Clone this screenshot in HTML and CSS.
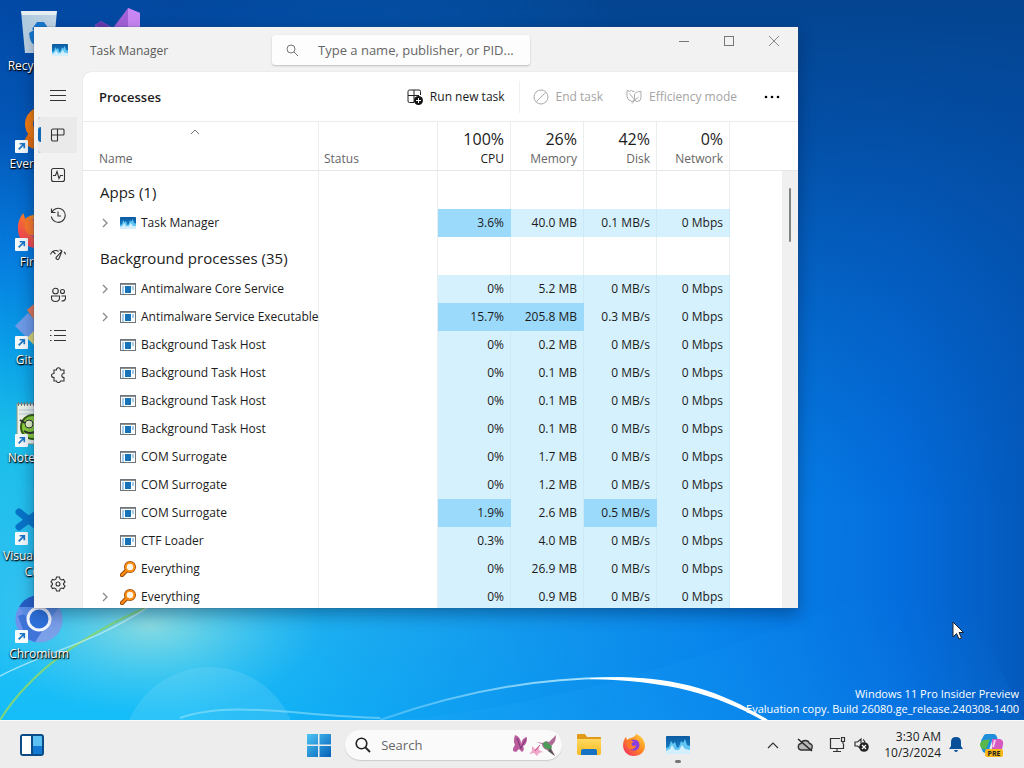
FILE: index.html
```html
<!DOCTYPE html>
<html lang="en">
<head>
<meta charset="utf-8">
<meta name="viewport" content="width=device-width, initial-scale=1">
<title>Task Manager</title>
<link rel="stylesheet" href="styles.css">
</head>
<body>
<svg class="defs" width="0" height="0" aria-hidden="true">
  <defs>
    <linearGradient id="gBlue" x1="0" y1="0" x2="1" y2="1"><stop offset="0" stop-color="#4cc4f4"/><stop offset="1" stop-color="#0560b8"/></linearGradient>
    <linearGradient id="gTm" x1="0" y1="0" x2="0" y2="1"><stop offset="0" stop-color="#0a5aa0"/><stop offset="1" stop-color="#1e90d8"/></linearGradient>
    <linearGradient id="gFox" x1="1" y1="0" x2="0" y2="1"><stop offset="0" stop-color="#ffe04a"/><stop offset=".45" stop-color="#ff8a1f"/><stop offset="1" stop-color="#f0246a"/></linearGradient>
    <linearGradient id="gBin" x1="0" y1="0" x2="1" y2="1"><stop offset="0" stop-color="#a9c6dc"/><stop offset="1" stop-color="#d8e6ef"/></linearGradient>
    <linearGradient id="gFolder" x1="0" y1="0" x2="0" y2="1"><stop offset="0" stop-color="#ffd961"/><stop offset="1" stop-color="#f9b920"/></linearGradient>
  </defs>
  <symbol id="tm" viewBox="0 0 24 18">
    <rect width="24" height="18" rx="1" fill="url(#gTm)"/>
    <path d="M0 12l3-1 2-6 2 3 2-2 2 6 2-1 2-6 2 2 2-4 2 6 3 1v8H0z" fill="#62c6f3"/>
    <path d="M0 15l4-2 2-4 3 5 4 0 3-5 3 4 5 1v4H0z" fill="#d3effb"/>
  </symbol>
  <symbol id="exe" viewBox="0 0 16 12">
    <rect x=".5" y=".5" width="15" height="11" fill="#fff" stroke="#6f7478"/>
    <path d="M1 1.500h14" stroke="#8a9196"/>
    <path d="M2 4h2M2 6h2M2 8h2M2 10h2" stroke="#4a9ad4"/>
    <rect x="5" y="3" width="6" height="7" fill="#1673ba"/>
    <path d="M12 4h2M12 6h2" stroke="#4a9ad4"/>
  </symbol>
  <symbol id="mag" viewBox="0 0 16 16">
    <path d="M6 10L2 14" stroke="#9a4a08" stroke-width="4.400" stroke-linecap="round"/>
    <circle cx="10" cy="6" r="4.200" fill="#fff" stroke="#9a4a08" stroke-width="3.600"/>
    <path d="M6 10L2 14" stroke="#ff8d12" stroke-width="2.400" stroke-linecap="round"/>
    <circle cx="10" cy="6" r="4.200" fill="#fff6e6" stroke="#ff8d12" stroke-width="2"/>
  </symbol>
  <symbol id="chev" viewBox="0 0 8 10"><path d="M2 1l4 4-4 4" fill="none" stroke="#888" stroke-width="1.300"/></symbol>
  <symbol id="arrow" viewBox="0 0 14 14"><rect width="14" height="14" rx="1" fill="#f5fafd"/><path d="M4 10l5-5M5 4h5v5" fill="none" stroke="#1c76c4" stroke-width="1.800"/></symbol>
  <symbol id="fox" viewBox="0 0 24 24">
    <path d="M12 23C5 23 1 18 1 12c0-4 2-7 3-8l1 3c1-1 3-2 4-2 2-1 4-1 5-4 5 2 9 6 9 12 0 6-5 10-11 10z" fill="url(#gFox)"/>
    <circle cx="12" cy="12" r="5.500" fill="#8a3fe0"/>
    <path d="M5 9c2-2 5-2 7 0-3 0-3 3-1 4 2 0 3-1 3-1 0 3-3 5-6 4-2-1-4-4-3-7z" fill="#ff7a2a"/>
  </symbol>
</svg>

<main class="desktop">
  <svg class="wallpaper" viewBox="0 0 1024 720" preserveAspectRatio="none" aria-hidden="true">
    <defs>
      <linearGradient id="wBase" x1="0" y1="0" x2="0" y2="1"><stop offset="0" stop-color="#0349a5"/><stop offset=".18" stop-color="#0457b8"/><stop offset=".36" stop-color="#067ee0"/><stop offset=".48" stop-color="#0a9ee8"/><stop offset=".6" stop-color="#1abeea"/><stop offset=".8" stop-color="#2cc0f0"/><stop offset="1" stop-color="#14bdf9"/></linearGradient>
      <linearGradient id="wRight" x1="0" y1="0" x2="1" y2="0"><stop offset=".18" stop-color="#0678e8" stop-opacity="0"/><stop offset=".7" stop-color="#0680ea" stop-opacity=".92"/><stop offset=".88" stop-color="#046ddd"/><stop offset="1" stop-color="#0459bc"/></linearGradient>
      <linearGradient id="wTop" x1="0" y1="0" x2="0" y2="1"><stop offset="0" stop-color="#04448f"/><stop offset=".2" stop-color="#044a9e" stop-opacity=".85"/><stop offset=".7" stop-color="#0457b5" stop-opacity="0"/></linearGradient>
      <linearGradient id="wFade" x1="0" y1="0" x2="1" y2="0"><stop offset="0" stop-color="#000"/><stop offset=".6" stop-color="#fff"/></linearGradient>
      <mask id="wMask"><rect width="1024" height="720" fill="url(#wFade)"/></mask>
      <radialGradient id="wGlow"><stop offset="0" stop-color="#a2e2dc" stop-opacity=".8"/><stop offset="1" stop-color="#5cd0ee" stop-opacity="0"/></radialGradient>
      <linearGradient id="wArc" x1="0" y1="0" x2="1" y2="0"><stop offset="0" stop-color="#b8ecff" stop-opacity=".3"/><stop offset=".7" stop-color="#c8f2ff"/><stop offset="1" stop-color="#fff"/></linearGradient>
      <linearGradient id="wRay" x1="0" y1="1" x2="1" y2="0"><stop offset="0" stop-color="#20a8fa" stop-opacity=".3"/><stop offset=".8" stop-color="#1593f5" stop-opacity="0"/></linearGradient>
    </defs>
    <rect width="1024" height="720" fill="url(#wBase)"/>
    <rect width="1024" height="720" fill="url(#wRight)"/>
    <rect width="1024" height="720" fill="url(#wTop)" mask="url(#wMask)"/>
    <ellipse cx="150" cy="625" rx="170" ry="90" fill="url(#wGlow)"/>
    <circle cx="210" cy="755" r="88" fill="#8fe0f8" opacity=".2"/>
    <path d="M400 720C600 700 760 640 950 560L1024 720z" fill="url(#wRay)"/>
    <path d="M0 720C25 680 70 640 150 606" fill="none" stroke="#7ed67c" stroke-width="2"/>
    <path d="M0 676C50 650 90 645 150 606" fill="none" stroke="#c8f2f8" stroke-width="1.500" opacity=".7"/>
    <path d="M180 718C230 700 300 716 380 718" fill="none" stroke="#a6e8fb" stroke-width="2" opacity=".5"/>
    <path d="M380 720C480 685 560 677 620 678C680 680 722 696 766 720" fill="none" stroke="url(#wArc)" stroke-width="2"/>
    <path d="M590 678C670 673 720 690 768 720H762C715 694 670 681 590 679z" fill="#fff"/>
  </svg>

  <ul class="shortcuts">
    <li class="shortcut">
      <svg class="big" viewBox="0 0 48 48" aria-hidden="true"><path d="M6 3h36l-4 42H10z" fill="url(#gBin)"/><path d="M6 3h36l-1 4H7z" fill="#e6eef4"/><path d="M17 21l5-7h7l4 6-4 3-4-4-3 6zM14 25l5-3 3 8h6v7h-7q-6 0-7-12z" fill="#1779cf"/></svg>
      <span>Recycle Bin</span></li>
    <li class="shortcut">
      <svg class="big" viewBox="0 0 48 48" aria-hidden="true"><path d="M20 28L13 40" stroke="#e86f0c" stroke-width="12"/><circle cx="27" cy="18" r="13" fill="none" stroke="#f57c0c" stroke-width="8"/><use href="#arrow" y="34" width="13" height="13"/></svg>
      <span>Everything</span></li>
    <li class="shortcut">
      <svg class="big" viewBox="0 0 48 48" aria-hidden="true"><use href="#fox" x="1" y="2" width="44" height="44"/><use href="#arrow" y="34" width="13" height="13"/></svg>
      <span>Firefox</span></li>
    <li class="shortcut">
      <svg class="big" viewBox="0 0 48 48" aria-hidden="true"><path d="M0 24L13 11l13 13-13 13z" fill="#6f9be8"/><path d="M12 8l8-7 9 9-9 9z" fill="#e07858"/><path d="M12 36l8-8 8 8-8 8z" fill="#ddd67a"/><use href="#arrow" y="34" width="13" height="13"/></svg>
      <span>Git Bash</span></li>
    <li class="shortcut">
      <svg class="big" viewBox="0 0 48 48" aria-hidden="true"><rect x="2" y="4" width="40" height="40" fill="#eef3ea" stroke="#8a9a88"/><path d="M3 4h38" stroke="#777" stroke-width="4" stroke-dasharray="1 2"/><path d="M4 10h36M4 14h36" stroke="#b8cbd8"/><ellipse cx="18" cy="27" rx="12" ry="12" fill="#8bd03a" stroke="#355c12" stroke-width="2"/><circle cx="14" cy="24" r="4" fill="#e8f7c8" stroke="#333"/><path d="M5 20l5 3M9 31q6 4 12 0" stroke="#333" stroke-width="2" fill="none"/><use href="#arrow" y="34" width="13" height="13"/></svg>
      <span>Notepad++</span></li>
    <li class="shortcut">
      <svg class="big" viewBox="0 0 48 48" aria-hidden="true"><path d="M4 14L30 35M4 29L32 8" stroke="#0874c8" stroke-width="7" stroke-linecap="round"/><path d="M30 2l14 6v32l-14 6z" fill="#2196e8"/><use href="#arrow" y="34" width="13" height="13"/></svg>
      <span>Visual Studio Code</span></li>
    <li class="shortcut">
      <svg class="big" viewBox="0 0 48 48" aria-hidden="true"><circle cx="24" cy="23" r="23" fill="#5b8fe6"/><path d="M4 11A23 23 0 0 1 44 11H24z" fill="#2661c8"/><path d="M4 11a23 23 0 0 0 16 35l10-18-16-4z" fill="#6f93ea"/><path d="M20 46l12-19 12-16a23 23 0 0 1-24 35z" fill="#7aa0ea"/><path d="M20 46l11-17-16-3-6-8-6 2 8 22z" fill="#3f74d8"/><circle cx="24" cy="23" r="11" fill="#2f72dc" stroke="#f4f8ff" stroke-width="3"/><use href="#arrow" y="34" width="13" height="13"/></svg>
      <span>Chromium</span></li>
  </ul>
  <svg class="studio" viewBox="0 0 48 48" aria-hidden="true"><path d="M1 17l6-4 12 7L34 0l12 5v38l-12 5L18 28 8 38z" fill="#a362d8"/><path d="M34 0l12 5v38l-12 5z" fill="#c987f4"/><path d="M1 17l6-4 14 9-6 8z" fill="#6a3bae"/></svg>

  <p class="watermark">Windows 11 Pro Insider Preview<br>Evaluation copy. Build 26080.ge_release.240308-1400</p>

  <section class="window" aria-label="Task Manager">
    <header class="titlebar">
      <svg class="app-icon" aria-hidden="true"><use href="#tm"/></svg>
      <h1 class="title">Task Manager</h1>
      <label class="find">
        <svg width="14" height="14" viewBox="0 0 14 14" aria-hidden="true"><circle cx="6" cy="6" r="4" fill="none" stroke="#777"/><path d="M9 9l4 4" stroke="#777"/></svg>
        <input type="search" aria-label="Search processes" placeholder="Type a name, publisher, or PID...">
      </label>
      <div class="controls">
        <button aria-label="Minimize"><svg width="12" height="12" viewBox="0 0 12 12"><path d="M1 6.500h10" stroke="#777"/></svg></button>
        <button aria-label="Maximize"><svg width="12" height="12" viewBox="0 0 12 12"><rect x="1.500" y="1.500" width="9" height="9" fill="none" stroke="#777"/></svg></button>
        <button aria-label="Close"><svg width="12" height="12" viewBox="0 0 12 12"><path d="M1 1l10 10M11 1L1 11" stroke="#888"/></svg></button>
      </div>
    </header>
    <div class="body">
      <nav class="rail" aria-label="Pages">
        <button aria-label="Menu"><svg viewBox="0 0 16 16"><path d="M0 3.500h16M0 8.500h16M0 13.500h16"/></svg></button>
        <button class="on" aria-label="Processes"><svg viewBox="0 0 16 16"><path d="M3 2h10a1 1 0 0 1 1 1v4a1 1 0 0 1-1 1H1.500V3.500A1.500 1.500 0 0 1 3 2zM7.500 2v12M1.500 8v4.500A1.500 1.500 0 0 0 3 14h4.500"/></svg></button>
        <button aria-label="Performance"><svg viewBox="0 0 16 16"><rect x="1.500" y="1.500" width="13" height="13" rx="2"/><path d="M3 8.500h2.500l1.500-4 2 7 1.500-3H13"/></svg></button>
        <button aria-label="App history"><svg viewBox="0 0 16 16"><path d="M1.500 1.500v4h4M1.800 5.500a7 7 0 1 1-.5 4M8 4.500V9h3"/></svg></button>
        <button aria-label="Startup apps"><svg viewBox="0 0 16 16"><path d="M.5 7.500Q2 3.500 6 3.500q1.500 0 2.500 1M3 4.500l2.500 2.500M9.500 3q1.500 0 2.500 1M14 5q1.500 1 1.500 2.500M12 4L9 11.500a1.500 1.500 0 1 1-2.800-1.200z"/></svg></button>
        <button aria-label="Users"><svg viewBox="0 0 16 16"><circle cx="5.500" cy="4" r="2.800"/><circle cx="12.500" cy="4.500" r="2"/><path d="M1.500 9h8v2q0 3.500-4 3.500t-4-3.500zM11.500 9h4v2q0 3-4 3"/></svg></button>
        <button aria-label="Details"><svg viewBox="0 0 16 16"><path d="M4 3.500h12M4 8.500h12M4 13.500h12M0 3.500h1.500M0 8.500h1.500M0 13.500h1.500"/></svg></button>
        <button aria-label="Services"><svg viewBox="0 0 16 16"><path d="M4 3h2.500Q6.500.800 8.500.800T10.500 3H14v3.500q-2.200 0-2.200 2t2.200 2V14h-3.500q0 1.500-2 1.500T6.500 14H4v-3.500q-2.500 0-2.500-2t2.500-2z"/></svg></button>
        <button class="settings" aria-label="Settings"><svg viewBox="0 0 16 16"><circle cx="8" cy="8" r="2"/><path d="M6.500 1h3l.5 2 1.500 1 2-.6L15 6l-1.500 1.500v1L15 10l-1.500 2.600-2-.6-1.500 1-.5 2h-3L6 13l-1.500-1-2 .6L1 10l1.500-1.500v-1L1 6l1.500-2.600 2 .6L6 3z"/></svg></button>
      </nav>
      <div class="content">
        <div class="toolbar">
          <h2>Processes</h2>
          <button class="run"><svg viewBox="0 0 16 16"><path d="M7 13.500H2.500A1.500 1.500 0 0 1 1 12V2.500A1.500 1.500 0 0 1 2.500 1H12a1.500 1.500 0 0 1 1.500 1.500V6M7 1v12.500M1 6.500h11" fill="none" stroke="#222"/><circle cx="11.500" cy="11.500" r="4.500" fill="#151515"/><path d="M9 11.500h5M11.500 9v5" stroke="#fff"/></svg>Run new task</button>
          <button class="end" disabled><svg viewBox="0 0 16 16"><circle cx="8" cy="8" r="7" fill="none" stroke="#aaa"/><path d="M3.500 12.500l9-9" stroke="#aaa"/></svg>End task</button>
          <button class="eff" disabled><svg viewBox="0 0 16 16"><path d="M8.500 8.500Q8 13 6 12.500 1.500 11.500 1 7.500V1.500q3 1.500 4.500 0Q7 3 8.500 2.500M3.500 4.500l4 5M8.500 5.500q1-3 6.500-3v6q0 4-4 4-3 0-2.500-4zM6 14.500q3-4 6.500-6.500" fill="none" stroke="#aaa"/></svg>Efficiency mode</button>
          <button class="more" aria-label="More options"><svg viewBox="0 0 16 16"><circle cx="2" cy="8" r="1.300"/><circle cx="8" cy="8" r="1.300"/><circle cx="14" cy="8" r="1.300"/></svg></button>
        </div>
        <div class="list">
          <table>
            <colgroup><col class="c-name"><col class="c-status"><col class="c-num"><col class="c-num"><col class="c-num"><col class="c-num"><col></colgroup>
            <thead>
              <tr>
                <th scope="col" class="name"><svg class="sort" viewBox="0 0 10 6" aria-hidden="true"><path d="M1 5l4-4 4 4" fill="none" stroke="#777"/></svg>Name</th>
                <th scope="col">Status</th>
                <th scope="col" class="num main"><b>100%</b>CPU</th>
                <th scope="col" class="num"><b>26%</b>Memory</th>
                <th scope="col" class="num"><b>42%</b>Disk</th>
                <th scope="col" class="num"><b>0%</b>Network</th>
                <td></td>
              </tr>
            </thead>
            <tbody>
              <tr class="group"><th scope="rowgroup">Apps (1)</th><td></td><td></td><td></td><td></td><td></td><td></td></tr>
              <tr><th scope="row"><div class="proc"><svg class="chev"><use href="#chev"/></svg><svg class="ico"><use href="#tm"/></svg>Task Manager</div></th><td></td><td class="hot">3.6%</td><td class="n">40.0 MB</td><td class="n">0.1 MB/s</td><td class="n">0 Mbps</td><td></td></tr>
              <tr class="group"><th scope="rowgroup">Background processes (35)</th><td></td><td></td><td></td><td></td><td></td><td></td></tr>
              <tr><th scope="row"><div class="proc"><svg class="chev"><use href="#chev"/></svg><svg class="ico"><use href="#exe"/></svg>Antimalware Core Service</div></th><td></td><td class="n">0%</td><td class="n">5.2 MB</td><td class="n">0 MB/s</td><td class="n">0 Mbps</td><td></td></tr>
              <tr><th scope="row"><div class="proc"><svg class="chev"><use href="#chev"/></svg><svg class="ico"><use href="#exe"/></svg>Antimalware Service Executable</div></th><td></td><td class="hot">15.7%</td><td class="hot">205.8 MB</td><td class="n">0.3 MB/s</td><td class="n">0 Mbps</td><td></td></tr>
              <tr><th scope="row"><div class="proc"><svg class="chev"></svg><svg class="ico"><use href="#exe"/></svg>Background Task Host</div></th><td></td><td class="n">0%</td><td class="n">0.2 MB</td><td class="n">0 MB/s</td><td class="n">0 Mbps</td><td></td></tr>
              <tr><th scope="row"><div class="proc"><svg class="chev"></svg><svg class="ico"><use href="#exe"/></svg>Background Task Host</div></th><td></td><td class="n">0%</td><td class="n">0.1 MB</td><td class="n">0 MB/s</td><td class="n">0 Mbps</td><td></td></tr>
              <tr><th scope="row"><div class="proc"><svg class="chev"></svg><svg class="ico"><use href="#exe"/></svg>Background Task Host</div></th><td></td><td class="n">0%</td><td class="n">0.1 MB</td><td class="n">0 MB/s</td><td class="n">0 Mbps</td><td></td></tr>
              <tr><th scope="row"><div class="proc"><svg class="chev"></svg><svg class="ico"><use href="#exe"/></svg>Background Task Host</div></th><td></td><td class="n">0%</td><td class="n">0.1 MB</td><td class="n">0 MB/s</td><td class="n">0 Mbps</td><td></td></tr>
              <tr><th scope="row"><div class="proc"><svg class="chev"></svg><svg class="ico"><use href="#exe"/></svg>COM Surrogate</div></th><td></td><td class="n">0%</td><td class="n">1.7 MB</td><td class="n">0 MB/s</td><td class="n">0 Mbps</td><td></td></tr>
              <tr><th scope="row"><div class="proc"><svg class="chev"></svg><svg class="ico"><use href="#exe"/></svg>COM Surrogate</div></th><td></td><td class="n">0%</td><td class="n">1.2 MB</td><td class="n">0 MB/s</td><td class="n">0 Mbps</td><td></td></tr>
              <tr><th scope="row"><div class="proc"><svg class="chev"></svg><svg class="ico"><use href="#exe"/></svg>COM Surrogate</div></th><td></td><td class="hot">1.9%</td><td class="n">2.6 MB</td><td class="hot">0.5 MB/s</td><td class="n">0 Mbps</td><td></td></tr>
              <tr><th scope="row"><div class="proc"><svg class="chev"></svg><svg class="ico"><use href="#exe"/></svg>CTF Loader</div></th><td></td><td class="n">0.3%</td><td class="n">4.0 MB</td><td class="n">0 MB/s</td><td class="n">0 Mbps</td><td></td></tr>
              <tr><th scope="row"><div class="proc"><svg class="chev"></svg><svg class="ico tall"><use href="#mag"/></svg>Everything</div></th><td></td><td class="n">0%</td><td class="n">26.9 MB</td><td class="n">0 MB/s</td><td class="n">0 Mbps</td><td></td></tr>
              <tr><th scope="row"><div class="proc"><svg class="chev"><use href="#chev"/></svg><svg class="ico tall"><use href="#mag"/></svg>Everything</div></th><td></td><td class="n">0%</td><td class="n">0.9 MB</td><td class="n">0 MB/s</td><td class="n">0 Mbps</td><td></td></tr>
            </tbody>
          </table>
          <div class="scrollbar"><div class="thumb"></div></div>
        </div>
      </div>
    </div>
  </section>

  <svg class="cursor" width="12" height="19" viewBox="0 0 12 19" aria-hidden="true"><path d="M1 1v15l3.500-3.500L7 18l2.500-1-2.500-5.500h4.500z" fill="#fff" stroke="#222"/></svg>
</main>

<footer class="taskbar">
  <div class="left">
    <button aria-label="Widgets"><svg width="24" height="22" viewBox="0 0 24 22"><rect x="1" y="1" width="22" height="20" rx="2" fill="#5cc0f2" stroke="#0b4c86" stroke-width="2"/><rect x="2" y="2" width="9" height="18" fill="#fff"/><path d="M12 2v18" stroke="#0b4c86" stroke-width="2"/><path d="M13 12h9v8h-9z" fill="#1479d2"/></svg></button>
  </div>
  <div class="pins">
    <button aria-label="Start"><svg width="24" height="24" viewBox="0 0 24 24"><path d="M0 1h11v10.500H0zM12.500 1H24v10.500H12.500zM0 13h11v11H0zM12.500 13H24v11H12.500z" fill="url(#gBlue)"/></svg></button>
    <label class="search">
      <svg width="16" height="16" viewBox="0 0 16 16" aria-hidden="true"><circle cx="6.500" cy="6.500" r="5.300" fill="none" stroke="#222" stroke-width="1.600"/><path d="M10.500 10.500l4.500 4.500" stroke="#222" stroke-width="1.800"/></svg>
      <input type="search" aria-label="Search" placeholder="Search">
      <svg width="46" height="24" viewBox="0 0 46 24" aria-hidden="true"><path d="M3 2q6 2 6 9 1-6 6-7 0 8-4 9 2 4-1 6l-3-3-3 3-3-1q0-4 2-6Q1 8 3 2z" fill="#b85a9c"/><path d="M5 5l4 11M14 6l-5 9" stroke="#7c3a74"/><path d="M20 13l3 3 4-3 0 4 4 2-4 1-2 3-3-3-5 1 3-3z" fill="#f0a6c8"/><path d="M23 18l5-6" stroke="#c05080"/><path d="M24 9l7 1q3-3 6-1l7-7q0 9-6 11l5 10-8-6q-5-2-5-6z" fill="#b06a98"/><path d="M31 10q3-3 5 0l4 3-1 4-4-1q-4-1-4-6z" fill="#4a9a58"/><path d="M38 15l5 8-7-5z" fill="#555"/></svg>
    </label>
    <button aria-label="File Explorer"><svg width="26" height="24" viewBox="0 0 26 24"><path d="M1 2q0-1 1-1h7l2 3h13q1 0 1 1v15H1z" fill="#e09a18"/><path d="M1 6h24v14q0 2-2 2H3q-2 0-2-2z" fill="url(#gFolder)"/><path d="M5 22v-4q0-2 2-2h12q2 0 2 2v4z" fill="#1673c4"/></svg></button>
    <button aria-label="Firefox"><svg width="24" height="24"><use href="#fox"/></svg></button>
    <button class="active" aria-label="Task Manager"><svg width="24" height="18"><use href="#tm"/></svg></button>
  </div>
  <div class="tray">
    <button aria-label="Show hidden icons"><svg width="12" height="8" viewBox="0 0 12 8"><path d="M1 7l5-5 5 5" fill="none" stroke="#333" stroke-width="1.200"/></svg></button>
    <button class="cloud" aria-label="OneDrive"><svg width="16" height="14" viewBox="0 0 16 14"><path d="M4 12a3.300 3.300 0 0 1 0-6.500 4.500 4.500 0 0 1 8.500 0A3.300 3.300 0 0 1 12.500 12z" fill="#b8b8b8" stroke="#333" stroke-width="1.300"/><path d="M1 1l14 12" stroke="#222" stroke-width="1.500"/></svg></button>
    <button aria-label="Network"><svg width="17" height="17" viewBox="0 0 17 17"><path d="M11 2.500H1.500v10h13V8M4 15.500h8M8 12.500v3M12.500 1.500h3v4h-3zM14 5.500V8" fill="none" stroke="#333" stroke-width="1.200"/></svg></button>
    <button aria-label="Volume muted"><svg width="15" height="15" viewBox="0 0 15 15"><path d="M6 11L3.500 9H1V5h2.500L7 2v4M9 2.500q1.500 1 2 3" fill="none" stroke="#333" stroke-width="1.200"/><circle cx="10" cy="10" r="4.800" fill="#222"/><path d="M8 8l4 4M12 8l-4 4" stroke="#fff" stroke-width="1.200"/></svg></button>
    <div class="clock"><time>3:30 AM</time><time>10/3/2024</time></div>
    <button aria-label="Notifications"><svg width="14" height="15" viewBox="0 0 14 15"><path d="M7 0q5 0 5 5v4l2 3H0l2-3V5q0-5 5-5zM5 13h4q-.5 2-2 2t-2-2z" fill="#08519a"/></svg></button>
    <button class="copilot" aria-label="Copilot"><svg width="24" height="24" viewBox="0 0 24 24"><path d="M6 1h8q2 0 3 3l1 4h-6L8 20H5q-2 0-3-3Q-1 9 3 4q1-3 3-3z" fill="#1f8fdc"/><path d="M0 11Q2 6 8 7l2-1-4 10H4Q0 16 0 11z" fill="#58b84c"/><path d="M12 6h8q4 1 3 6-1 6-4 9H8q3-1 4-6z" fill="#d65ac0"/><path d="M15 7l-2 7" stroke="#f5d0f0" stroke-width="2"/><rect x="5" y="16" width="18" height="8" rx="2" fill="#f8b818"/><text x="14" y="23" text-anchor="middle">PRE</text></svg></button>
  </div>
</footer>
</body>
</html>
```
FILE: styles.css
```css
* { box-sizing: border-box; }

body {
  margin: 0;
  height: 100vh;
  display: flex;
  flex-direction: column;
  overflow: hidden;
  font-family: "Open Sans", "Noto Sans", sans-serif;
  font-size: 12px;
  line-height: 16px;
  color: #1b1b1b;
}

button {
  display: flex;
  align-items: center;
  justify-content: center;
  padding: 0;
  border: 0;
  background: none;
  font: inherit;
  color: inherit;
}

input {
  min-width: 0;
  border: 0;
  padding: 0;
  background: none;
  font: inherit;
  outline: 0;
}

input::placeholder { color: #666; opacity: 1; }

.defs { position: absolute; }

/* Desktop */
.desktop {
  position: relative;
  flex: 1;
  min-height: 0;
  overflow: hidden;
}

.wallpaper {
  position: absolute;
  inset: 0;
  width: 100%;
  height: 100%;
}

.shortcuts {
  position: relative;
  width: 78px;
  margin: 0;
  padding: 0;
  list-style: none;
}

.shortcut {
  display: flex;
  flex-direction: column;
  align-items: center;
  height: 98px;
  padding-top: 8px;
  color: #fff;
  text-align: center;
  text-shadow: 0 1px 2px #000, 1px 1px 1px #000;
}

.shortcut .big { flex: none; width: 48px; height: 48px; margin-bottom: 2px; }

.studio {
  position: absolute;
  left: 94px;
  top: 8px;
  width: 48px;
  height: 48px;
}

.watermark {
  position: absolute;
  right: 5px;
  bottom: 4px;
  margin: 0;
  color: #fff;
  font-size: 11px;
  line-height: 15px;
  text-align: right;
  white-space: nowrap;
}

.cursor { position: absolute; left: 952px; top: 621px; }

/* Window */
.window {
  position: absolute;
  inset: 27px 226px 112px 34px;
  display: flex;
  flex-direction: column;
  overflow: hidden;
  background: #f2f2f2;
  box-shadow: 0 0 1px #456, 0 6px 16px rgba(0, 20, 60, .4);
}

.titlebar {
  display: flex;
  align-items: flex-start;
  flex: none;
  height: 45px;
  padding: 0 2px 0 18px;
}

.app-icon { width: 16px; height: 12px; margin-top: 17px; }

.title {
  width: 204px;
  margin: 16px 0 0;
  padding-left: 22px;
  font-size: 12px;
  font-weight: 400;
  color: #5a5a5a;
}

.find {
  display: flex;
  align-items: center;
  gap: 19px;
  width: 258px;
  height: 30px;
  margin-top: 8px;
  padding: 0 4px 0 13px;
  border-radius: 3px;
  background: #fdfdfd;
  box-shadow: 0 1px 2px rgba(0, 0, 0, .22);
  font-size: 13px;
}

.find svg { flex: none; }
.find input { flex: 1; }

.controls { display: flex; margin-left: auto; }
.controls button { width: 45px; height: 28px; }

.body { display: flex; flex: 1; min-height: 0; }

.rail {
  display: flex;
  flex-direction: column;
  flex: none;
  gap: 4px;
  width: 49px;
  padding: 5px 6px 6px 4px;
}

.rail button {
  flex: none;
  height: 36px;
  border-radius: 3px;
}

.rail svg {
  width: 16px;
  height: 16px;
  fill: none;
  stroke: #333;
  stroke-width: 1.1;
}

.rail .on {
  background: #eaeaea;
  box-shadow: inset 0 10px #eaeaea, inset 0 -11px #eaeaea, inset 3px 0 #0f67b5;
}

.rail .settings { margin-top: auto; }

.content {
  display: flex;
  flex-direction: column;
  flex: 1;
  min-width: 0;
  border-top-left-radius: 8px;
  background: #fff;
  box-shadow: 0 0 1px #bbb;
}

.toolbar {
  display: flex;
  align-items: center;
  flex: none;
  height: 50px;
  padding: 0 18px 0 16px;
  border-bottom: 1px solid #ececec;
}

.toolbar h2 {
  flex: 1;
  margin: 0;
  font-size: 13px;
  font-weight: 600;
}

.toolbar button { gap: 7px; white-space: nowrap; }
.toolbar button:disabled { color: #a4a4a4; }
.toolbar .run { height: 32px; margin-right: 13px; padding-right: 14px; border-right: 1px solid #f0f0f0; }
.toolbar .end { margin-right: 23px; }
.toolbar .eff { margin-right: 27px; }
.toolbar svg { width: 16px; height: 16px; }

/* Process list */
.list {
  position: relative;
  flex: 1;
  min-height: 0;
  overflow: hidden;
}

table {
  width: 100%;
  border-collapse: separate;
  border-spacing: 0;
  table-layout: fixed;
}

.c-name { width: 236px; }
.c-status { width: 119px; }
.c-num { width: 73px; }

th, td {
  height: 28px;
  padding: 0 6px;
  border-right: 1px solid #e9eef1;
  font-weight: 400;
  text-align: right;
  white-space: nowrap;
}

th { text-align: left; }

th:last-child, td:last-child { border-right: 0; }

thead th, thead td {
  height: 49px;
  padding: 0 6px 3px 5px;
  border-bottom: 1px solid #e6e6e6;
  color: #666;
  vertical-align: bottom;
}

thead .name { padding-left: 16px; }

.sort { display: block; width: 10px; height: 6px; margin: 0 0 16px 91px; }

thead .num { text-align: right; }
.num b { display: block; margin-bottom: 3px; font-size: 16px; line-height: 18px; font-weight: 400; color: #1b1b1b; }
thead .main { color: #1b1b1b; }

.group th {
  height: 38px;
  padding: 3px 0 0 17px;
  font-size: 15px;
}

tbody th { padding: 0 0 0 18px; }

.proc { display: flex; align-items: center; }
.proc svg { flex: none; }
.chev { width: 8px; height: 10px; margin-right: 11px; }
.ico { width: 16px; height: 12px; margin-right: 5px; }
.tall { height: 16px; }

.n { background: #d5f1fd; border-color: #cbe9f6; }
.hot { background: #9bdafb; border-color: #9bdafb; }

.scrollbar {
  position: absolute;
  top: 49px;
  right: 0;
  bottom: 0;
  width: 16px;
  padding: 17px 7px 0;
  background: #f0f0f0;
}

.thumb { height: 54px; background: #7c8583; border-radius: 1px; }

/* Taskbar */
.taskbar {
  display: flex;
  align-items: center;
  flex: none;
  height: 48px;
  border-top: 1px solid #f8fbfd;
  background: #ededed;
}

.left { flex: 0 0 30%; padding-left: 20px; }

.pins { display: flex; align-items: center; gap: 20px; }

.search {
  display: flex;
  align-items: center;
  gap: 10px;
  width: 217px;
  height: 30px;
  margin: 0 -6px;
  padding: 0 4px 0 10px;
  border-radius: 15px;
  background: #fafafa;
  box-shadow: 0 1px 1px #ccc;
  font-size: 13px;
}

.search svg { flex: none; }
.search input { flex: 1; }

.active { position: relative; }

.active::after {
  content: "";
  position: absolute;
  bottom: -9px;
  width: 6px;
  height: 3px;
  border-radius: 2px;
  background: #777;
}

.tray {
  display: flex;
  align-items: center;
  gap: 8px;
  margin-left: auto;
  padding-right: 20px;
}

.cloud { margin: 0 8px 0 10px; }
.clock { display: flex; flex-direction: column; margin-left: 7px; text-align: right; }
.copilot { margin-left: 9px; }
.copilot text { font-size: 7px; font-weight: 700; fill: #222; }
```
